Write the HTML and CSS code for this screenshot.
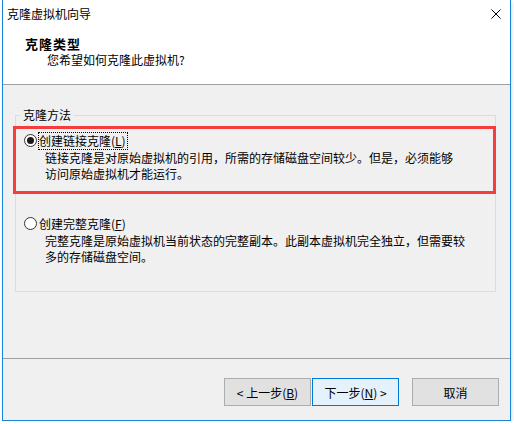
FILE: index.html
```html
<!DOCTYPE html>
<html lang="zh-CN">
<head>
    <meta charset="UTF-8">
    <title>克隆虚拟机向导</title>
    <link rel="stylesheet" href="styles.css">
</head>
<body>
    <div class="window">
        <div class="titlebar">
            <span class="title">克隆虚拟机向导</span>
            <svg class="close" viewBox="0 0 10 10">
                <path d="M0.5 0.5 L9.5 9.5 M9.5 0.5 L0.5 9.5"/>
            </svg>
        </div>
        <div class="header">
            <p class="header-title">克隆类型</p>
            <p class="header-sub">您希望如何克隆此虚拟机?</p>
        </div>
        <div class="content">
            <fieldset class="group">
                <legend>克隆方法</legend>
                <div class="option highlight">
                    <div class="option-row">
                        <span class="radio checked"></span>
                        <span class="option-label focused">创建链接克隆(<u>L</u>)</span>
                    </div>
                    <p class="option-desc">链接克隆是对原始虚拟机的引用，所需的存储磁盘空间较少。但是，必须能够<br>访问原始虚拟机才能运行。</p>
                </div>
                <div class="option">
                    <div class="option-row">
                        <span class="radio"></span>
                        <span class="option-label">创建完整克隆(<u>F</u>)</span>
                    </div>
                    <p class="option-desc">完整克隆是原始虚拟机当前状态的完整副本。此副本虚拟机完全独立，但需要较<br>多的存储磁盘空间。</p>
                </div>
            </fieldset>
        </div>
        <div class="footer">
            <button class="btn">&lt; 上一步(<u>B</u>)</button>
            <button class="btn default">下一步(<u>N</u>) &gt;</button>
            <button class="btn cancel">取消</button>
        </div>
    </div>
</body>
</html>
```

FILE: styles.css
```css
* {
    margin: 0;
    padding: 0;
    box-sizing: border-box;
}

body {
    font-family: "Noto Sans CJK SC", "Liberation Sans", sans-serif;
    font-size: 12px;
    line-height: 16px;
    color: #000;
    background: #fff;
    padding-left: 2px;
}

.window {
    width: 509px;
    height: 421px;
    border: 1px solid #1883d7;
    border-top: none;
    background: #f0f0f0;
    display: flex;
    flex-direction: column;
    box-shadow: 1px 2px 3px rgba(0, 0, 0, 0.15);
}

.titlebar {
    height: 30px;
    background: #fff;
    display: flex;
    align-items: center;
    justify-content: space-between;
    padding: 0 9px 2px 4px;
}

.title {
    font-size: 12px;
}

.close {
    width: 10px;
    height: 10px;
    stroke: #000;
    stroke-width: 1;
    fill: none;
}

.header {
    height: 55px;
    background: #fff;
    border-bottom: 1px solid #a0a0a0;
    padding: 6px 0 0 22px;
}

.header-title {
    font-weight: bold;
    font-size: 13px;
    letter-spacing: 1px;
}

.header-sub {
    padding-left: 22px;
}

.content {
    flex: 1;
    border-bottom: 1px solid #a0a0a0;
    padding-top: 22px;
}

.group {
    margin: 0 14px 0 12px;
    border: 1px solid #dcdcdc;
    padding: 0 0 26px 0;
}

.group legend {
    margin-left: 4px;
    padding: 0 3px;
}

.option {
    margin-top: 21px;
    padding: 0 0 0 8px;
}

.option.highlight {
    margin: 3px -1px 0 -3px;
    border: 3px solid #f63d3d;
    padding: 3px 0 9px 8px;
}

.option-row {
    display: flex;
    align-items: center;
    gap: 1px;
}

.radio {
    width: 13px;
    height: 13px;
    border: 1px solid #333;
    border-radius: 50%;
    background: #fff;
    display: flex;
    align-items: center;
    justify-content: center;
    margin-top: -2px;
}

.radio.checked::after {
    content: "";
    width: 7px;
    height: 7px;
    border-radius: 50%;
    background: #1a1a1a;
}

.option-label {
    padding: 0 1px 0 0;
    border: 1px dotted transparent;
}

.option-label.focused {
    border-color: #000;
}

.option-desc {
    padding-left: 21px;
}

.footer {
    height: 61px;
    display: flex;
    justify-content: flex-end;
    align-items: flex-start;
    padding: 19px 11px 0 0;
}

.btn {
    width: 87px;
    height: 28px;
    font-family: inherit;
    font-size: 12px;
    color: #000;
    background: #e1e1e1;
    border: 1px solid #adadad;
    margin-left: 1px;
}

.btn.default {
    background: #e5f1fb;
    border-color: #0078d7;
}

.btn.cancel {
    margin-left: 13px;
}
```
